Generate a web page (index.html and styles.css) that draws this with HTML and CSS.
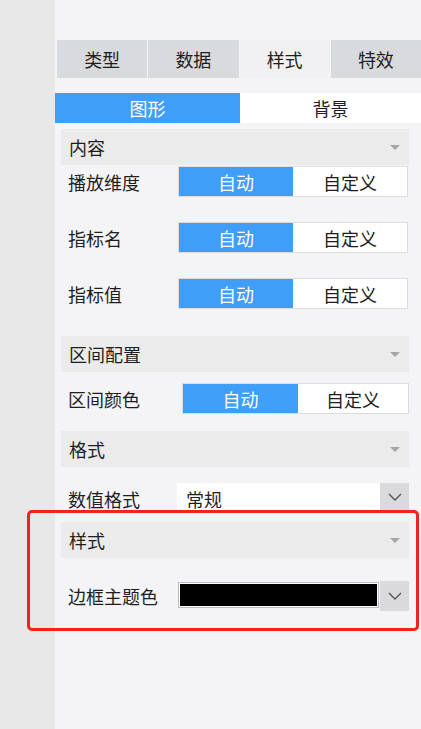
FILE: index.html
```html
<!DOCTYPE html>
<html lang="zh-CN">
<head>
<meta charset="utf-8">
<title>样式</title>
<link rel="stylesheet" href="styles.css">
</head>
<body>
<div class="app">
  <aside class="rail"></aside>
  <main class="panel">
    <nav class="tabs">
      <div class="tab">类型</div>
      <div class="tab">数据</div>
      <div class="tab active">样式</div>
      <div class="tab">特效</div>
    </nav>
    <div class="subtabs">
      <div class="subtab active">图形</div>
      <div class="subtab">背景</div>
    </div>
    <div class="content">
      <div class="head">内容<span class="caret"></span></div>
      <div class="row r1">
        <span class="label">播放维度</span>
        <div class="toggle t1"><span class="on">自动</span><span class="off">自定义</span></div>
      </div>
      <div class="row r1">
        <span class="label">指标名</span>
        <div class="toggle t1"><span class="on">自动</span><span class="off">自定义</span></div>
      </div>
      <div class="row r1">
        <span class="label">指标值</span>
        <div class="toggle t1"><span class="on">自动</span><span class="off">自定义</span></div>
      </div>

      <div class="head h2">区间配置<span class="caret"></span></div>
      <div class="row r2">
        <span class="label">区间颜色</span>
        <div class="toggle t2"><span class="on">自动</span><span class="off">自定义</span></div>
      </div>

      <div class="head h3">格式<span class="caret"></span></div>
      <div class="row r3">
        <span class="label">数值格式</span>
        <div class="select s1">
          <span class="value">常规</span>
          <span class="drop"><svg width="14" height="8" viewBox="0 0 14 8"><path d="M1 1 L7 7 L13 1" fill="none" stroke="#555" stroke-width="1.4"/></svg></span>
        </div>
      </div>

      <div class="head h4">样式<span class="caret"></span></div>
      <div class="row r4">
        <span class="label">边框主题色</span>
        <div class="select s2">
          <span class="swatch-wrap"><span class="swatch"></span></span>
          <span class="drop"><svg width="14" height="8" viewBox="0 0 14 8"><path d="M1 1 L7 7 L13 1" fill="none" stroke="#555" stroke-width="1.4"/></svg></span>
        </div>
      </div>
    </div>
  </main>
  <div class="highlight"></div>
</div>
</body>
</html>
```
FILE: styles.css
```css
* { box-sizing: border-box; }
html, body {
  margin: 0;
  padding: 0;
}
body {
  width: 421px;
  height: 729px;
  overflow: hidden;
  background: #f4f4f6;
  font-family: "Noto Sans CJK SC", "Noto Sans", sans-serif;
  font-size: 18px;
  color: #1e1e1e;
}
.app {
  position: relative;
  display: flex;
  height: 729px;
}
.rail {
  width: 55px;
  flex: none;
  background: #e8e8e9;
}
.panel {
  flex: 1;
  padding-top: 40px;
}
.tabs {
  display: grid;
  grid-template-columns: repeat(4, 1fr);
  gap: 1px;
  padding-left: 2px;
  height: 38px;
}
.tab {
  background: #d9dadd;
  display: flex;
  align-items: center;
  justify-content: center;
  line-height: 1;
}
.tab.active {
  background: #f1f1f3;
}
.subtabs {
  margin-top: 15px;
  display: grid;
  grid-template-columns: 185px 1fr;
  height: 30px;
}
.subtab {
  display: flex;
  align-items: center;
  justify-content: center;
  background: #ffffff;
  line-height: 1;
}
.subtab.active {
  background: #3f9ef7;
  color: #fff;
}
.content {
  padding: 6px 12px 0 6px;
}
.head {
  position: relative;
  height: 36px;
  background: #ebebec;
  display: flex;
  align-items: center;
  padding-left: 8px;
  line-height: 1;
}
.caret {
  position: absolute;
  right: 9px;
  top: 16px;
  width: 0;
  height: 0;
  border-left: 5.5px solid transparent;
  border-right: 5.5px solid transparent;
  border-top: 5px solid #a6a6a8;
}
.h2 { margin-top: 3px; }
.row {
  display: flex;
  align-items: flex-start;
  justify-content: space-between;
}
.label {
  padding-left: 7px;
  line-height: 1;
  display: flex;
  align-items: center;
}
.r1 { height: 56px; padding-top: 1px; }
.r1 .label { height: 31px; }
.r2 { height: 59px; padding-top: 11px; }
.r2 .label { height: 31px; }
.r3 { height: 44px; padding-top: 16px; }
.r3 .label { height: 28px; padding-top: 3px; }
.h4 { margin-top: 11px; }
.r4 { padding-top: 23px; }
.r4 .label { height: 30px; }

.toggle {
  display: flex;
  height: 31px;
  border: 1px solid #dcdcdc;
  background: #fff;
}
.toggle span {
  display: flex;
  align-items: center;
  justify-content: center;
  line-height: 1;
}
.toggle .on {
  background: #3f9ef7;
  color: #fff;
}
.t1 { width: 230px; margin-right: 1px; }
.t1 .on { width: 114px; }
.t1 .off { flex: 1; }
.t2 { width: 227px; }
.t2 .on { width: 115px; }
.t2 .off { flex: 1; }

.select {
  display: flex;
  width: 232px;
  background: #fff;
}
.s1 { height: 28px; }
.s1 .value {
  flex: 1;
  padding-left: 9px;
  padding-top: 3px;
  display: flex;
  align-items: center;
  line-height: 1;
}
.drop {
  width: 29px;
  flex: none;
  background: #dadadc;
  display: flex;
  align-items: center;
  justify-content: center;
}
.s2 {
  height: 30px;
  background: #dadadc;
}
.swatch-wrap {
  flex: 1;
  background: #f4f4f6;
  padding: 1px 1px 3px 1px;
}
.swatch {
  display: block;
  height: 100%;
  border: 1px solid #bdbdbd;
  padding: 1px;
  background: #000;
  box-shadow: inset 0 0 0 1px #fff;
}

.highlight {
  position: absolute;
  left: 27px;
  top: 510px;
  width: 392px;
  height: 121px;
  border: 3px solid #f5221b;
  border-radius: 5px;
  pointer-events: none;
}
```
